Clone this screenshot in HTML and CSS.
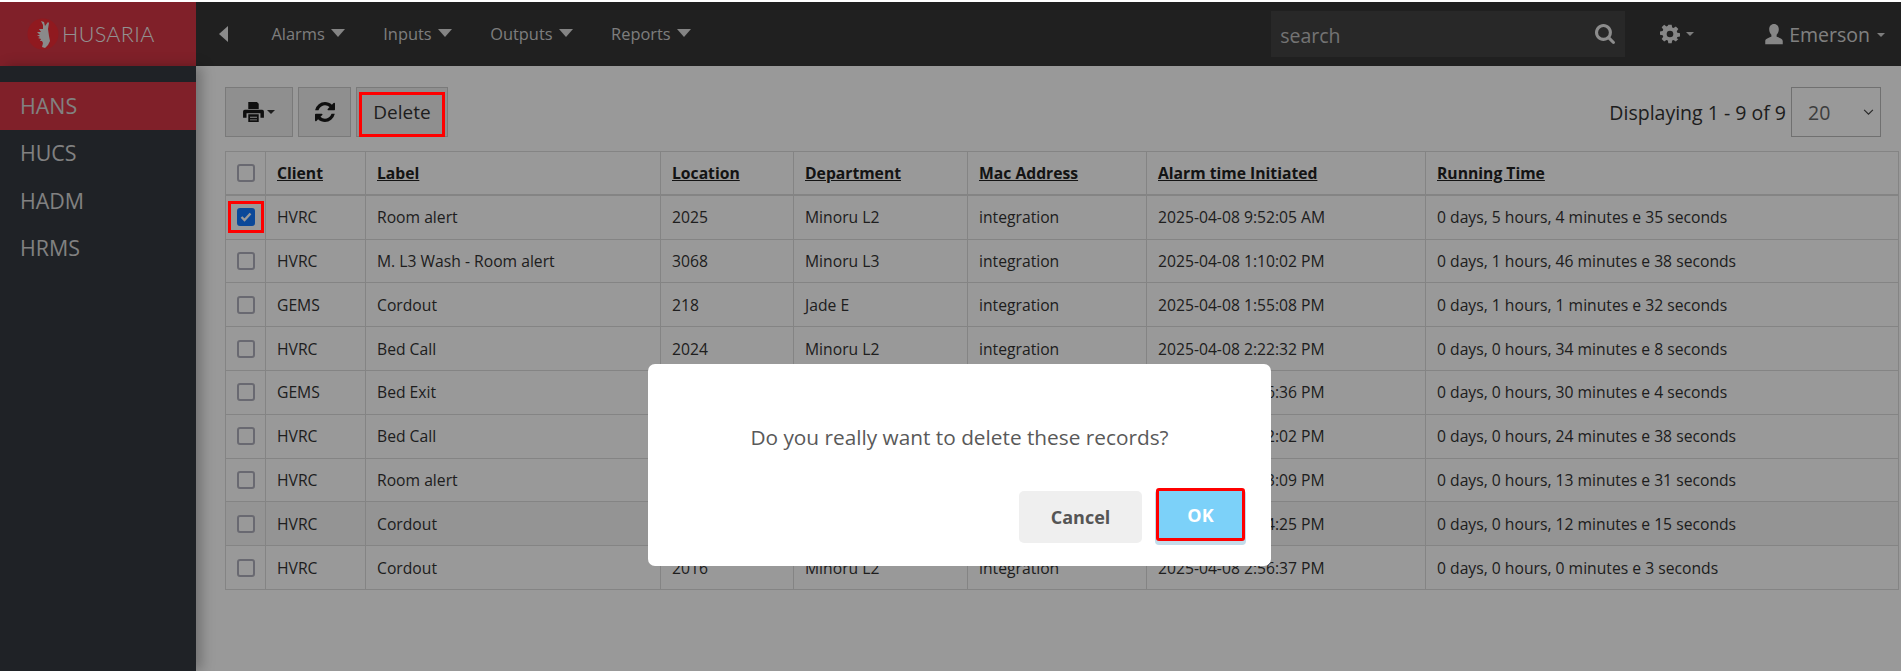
FILE: index.html
```html
<!DOCTYPE html>
<html lang="en">
<head>
<meta charset="utf-8">
<title>Husaria</title>
<link rel="stylesheet" href="styles.css">
</head>
<body>
<div class="app">
  <header class="navbar">
    <div class="brand">
      <svg class="brand-mark" viewBox="0 0 32 32" width="32" height="32" aria-hidden="true">
        <circle cx="16" cy="16" r="15.500" fill="#f02a34"/>
        <path d="M14 3l3 1 1 4 3-4 1 1-1 6 1 7 1 5-2 4-3 3-3-1 1-4-1-2-2 0 1-2-3-1 2-1-3-2 3 0-3-3 4 0-2-3 4 0 0-4z" fill="#e6e6e6"/>
      </svg>
      <span class="brand-name">HUSARIA</span>
    </div>
    <span class="collapse-arrow"></span>
    <nav class="menu">
      <a class="menu-item">Alarms<i class="tri"></i></a>
      <a class="menu-item">Inputs<i class="tri"></i></a>
      <a class="menu-item">Outputs<i class="tri"></i></a>
      <a class="menu-item">Reports<i class="tri"></i></a>
    </nav>
    <div class="search">
      <span class="search-text">search</span>
      <svg viewBox="0 0 1664 1664" width="20" height="20" aria-hidden="true"><path fill="#eaeaea" d="M1152 704q0-185-131.500-316.500T704 256 387.500 387.500 256 704t131.500 316.500T704 1152t316.500-131.500T1152 704zm512 832q0 52-38 90t-90 38q-54 0-90-38l-343-342q-179 124-399 124-143 0-273.500-55.500t-225-150-150-225T0 704t55.500-273.500 150-225 225-150T704 0t273.500 55.500 225 150 150 225T1408 704q0 220-124 399l343 343q37 37 37 90z"/></svg>
    </div>
    <div class="gear">
      <svg viewBox="0 0 24 24" width="20" height="20" aria-hidden="true"><path fill="#e0e0e0" fill-rule="evenodd" d="M10 1h4l.6 3.200 1.700.7L19 3l3 3-1.900 2.700.7 1.700 3.200.6v4l-3.200.6-.7 1.700L22 18l-3 3-2.700-1.900-1.700.7L14 23h-4l-.6-3.200-1.700-.7L5 21l-3-3 1.900-2.700-.7-1.700L0 13V9l3.200-.6.700-1.700L2 4l3-3 2.700 1.900 1.700-.7zM12 8a4 4 0 1 0 0 8 4 4 0 0 0 0-8z"/></svg>
      <i class="caret"></i>
    </div>
    <div class="user">
      <svg viewBox="0 0 20 24" width="20" height="21" aria-hidden="true"><path fill="#e0e0e0" d="M10 0c3.500 0 5.500 2.600 5.500 6 0 2.800-1.200 5-2.500 6.200v2.300c3 1 7 2.300 7 5V23H0v-3.500c0-2.700 4-4 7-5v-2.300C5.700 11 4.500 8.800 4.500 6 4.500 2.600 6.500 0 10 0z"/></svg>
      <span>Emerson</span>
      <i class="caret"></i>
    </div>
  </header>
  <div class="body">
    <aside class="sidebar">
      <a class="side-item active">HANS</a>
      <a class="side-item">HUCS</a>
      <a class="side-item">HADM</a>
      <a class="side-item">HRMS</a>
    </aside>
    <main class="content">
      <div class="toolbar">
        <div class="tools">
          <button class="tool tool-print">
            <svg viewBox="0 0 24 23" width="21" height="20" aria-hidden="true"><path fill="#1a1a1a" fill-rule="evenodd" d="M6 0h10l2 2v6H6zM2 9h20a2 2 0 0 1 2 2v7h-4v-5H4v5H0v-7a2 2 0 0 1 2-2zM6 14h12v9H6zm2 3v1h8v-1zm0 3v1h8v-1z"/></svg>
            <i class="caret dark"></i>
          </button>
          <button class="tool tool-refresh">
            <svg viewBox="0 0 1536 1536" width="20" height="20" aria-hidden="true"><path fill="#1a1a1a" d="M1511 928q0 5-1 7-64 268-268 434.500T764 1536q-146 0-282.500-55T238 1324l-129 129q-19 19-45 19t-45-19-19-45V960q0-26 19-45t45-19h448q26 0 45 19t19 45-19 45l-137 137q71 66 161 102t187 36q134 0 250-65t186-179q11-17 53-117 8-23 30-23h192q13 0 22.500 9.500t9.500 22.500zm25-800v448q0 26-19 45t-45 19h-448q-26 0-45-19t-19-45 19-45l138-138Q969 256 768 256q-134 0-250 65T332 500q-11 17-53 117-8 23-30 23H50q-13 0-22.500-9.500T18 608v-7q65-268 270-434.500T768 0q146 0 284 55.500T1297 212l130-129q19-19 45-19t45 19 19 45z"/></svg>
          </button>
          <button class="tool tool-delete">Delete</button>
        </div>
        <div class="paging">
          <span>Displaying 1 - 9 of 9</span>
          <div class="page-size"><span>20</span><svg viewBox="0 0 12 8" width="11" height="7" aria-hidden="true"><path d="M1 1l5 5 5-5" fill="none" stroke="#444" stroke-width="1.300"/></svg></div>
        </div>
      </div>
      <table class="grid">
        <colgroup>
          <col class="c0"><col class="c1"><col class="c2"><col class="c3"><col class="c4"><col class="c5"><col class="c6"><col>
        </colgroup>
        <thead>
          <tr>
            <th class="check"><span class="box"></span></th>
            <th>Client</th><th>Label</th><th>Location</th><th>Department</th><th>Mac Address</th><th>Alarm time Initiated</th><th>Running Time</th>
          </tr>
        </thead>
        <tbody>
          <tr><td class="check"><span class="box on"><svg viewBox="0 0 12 10" width="12" height="10" aria-hidden="true"><path d="M1.500 5l3 3 6-6.500" fill="none" stroke="#fff" stroke-width="2.400"/></svg></span></td><td>HVRC</td><td>Room alert</td><td>2025</td><td>Minoru L2</td><td>integration</td><td>2025-04-08 9:52:05 AM</td><td>0 days, 5 hours, 4 minutes e 35 seconds</td></tr>
          <tr><td class="check"><span class="box"></span></td><td>HVRC</td><td>M. L3 Wash - Room alert</td><td>3068</td><td>Minoru L3</td><td>integration</td><td>2025-04-08 1:10:02 PM</td><td>0 days, 1 hours, 46 minutes e 38 seconds</td></tr>
          <tr><td class="check"><span class="box"></span></td><td>GEMS</td><td>Cordout</td><td>218</td><td>Jade E</td><td>integration</td><td>2025-04-08 1:55:08 PM</td><td>0 days, 1 hours, 1 minutes e 32 seconds</td></tr>
          <tr><td class="check"><span class="box"></span></td><td>HVRC</td><td>Bed Call</td><td>2024</td><td>Minoru L2</td><td>integration</td><td>2025-04-08 2:22:32 PM</td><td>0 days, 0 hours, 34 minutes e 8 seconds</td></tr>
          <tr><td class="check"><span class="box"></span></td><td>GEMS</td><td>Bed Exit</td><td>208</td><td>Jade E</td><td>integration</td><td>2025-04-08 2:26:36 PM</td><td>0 days, 0 hours, 30 minutes e 4 seconds</td></tr>
          <tr><td class="check"><span class="box"></span></td><td>HVRC</td><td>Bed Call</td><td>2011</td><td>Minoru L2</td><td>integration</td><td>2025-04-08 2:32:02 PM</td><td>0 days, 0 hours, 24 minutes e 38 seconds</td></tr>
          <tr><td class="check"><span class="box"></span></td><td>HVRC</td><td>Room alert</td><td>2031</td><td>Minoru L2</td><td>integration</td><td>2025-04-08 2:43:09 PM</td><td>0 days, 0 hours, 13 minutes e 31 seconds</td></tr>
          <tr><td class="check"><span class="box"></span></td><td>HVRC</td><td>Cordout</td><td>2016</td><td>Minoru L2</td><td>integration</td><td>2025-04-08 2:44:25 PM</td><td>0 days, 0 hours, 12 minutes e 15 seconds</td></tr>
          <tr><td class="check"><span class="box"></span></td><td>HVRC</td><td>Cordout</td><td>2016</td><td>Minoru L2</td><td>integration</td><td>2025-04-08 2:56:37 PM</td><td>0 days, 0 hours, 0 minutes e 3 seconds</td></tr>
        </tbody>
      </table>
    </main>
  </div>
</div>
<div class="overlay">
  <span class="annot annot-delete"></span>
  <span class="annot annot-check"></span>
  <div class="dialog">
    <p class="question">Do you really want to delete these records?</p>
    <div class="actions">
      <button class="btn btn-cancel">Cancel</button>
      <button class="btn btn-ok">OK</button>
    </div>
  </div>
</div>
</body>
</html>
```
FILE: styles.css
```css
* { box-sizing: border-box; }
html, body { margin: 0; height: 100%; overflow: hidden; }
body { font-family: "Open Sans", "Noto Sans", sans-serif; background: #fff; color: #333; font-size: 14px; }
.app { display: flex; flex-direction: column; height: 671px; padding-top: 2px; }

.navbar { height: 64px; flex: none; display: flex; align-items: center; background: #363636; color: #d6d6d6; }
.brand { width: 196px; height: 100%; flex: none; display: flex; align-items: center; padding-left: 27px; gap: 3px; background: #d53645; }
.brand-mark { flex: none; }
.brand-name { font-family: "Lato", "Open Sans", sans-serif; font-weight: 300; font-size: 21.500px; letter-spacing: .4px; color: #f4f4f4; }
.collapse-arrow { width: 0; height: 0; margin-left: 23px; border-style: solid; border-width: 8px 9px 8px 0; border-color: transparent #e8e8e8 transparent transparent; }
.menu { display: flex; margin-left: 43.500px; gap: 38.500px; padding-bottom: 2px; }
.menu-item { display: flex; align-items: center; gap: 6px; font-size: 16.400px; color: #d0d0d0; }
.tri { width: 0; height: 0; border-style: solid; border-width: 8px 7px 0; border-color: #dcdcdc transparent transparent; }
.search { width: 354px; height: 46px; margin-left: auto; display: flex; align-items: center; justify-content: space-between; padding: 2px 10px 0 9px; background: #434343; font-size: 19.500px; color: #c0c0c0; }
.search svg { margin-top: -2px; }
.gear { margin-left: 35px; display: flex; align-items: center; gap: 4px; }
.user { margin-left: 70px; margin-right: 16px; display: flex; align-items: center; gap: 5px; padding-top: 1px; font-size: 19.500px; color: #d6d6d6; }
.caret { display: inline-block; width: 0; height: 0; margin-left: 2px; border-style: solid; border-width: 4.500px 4.500px 0; border-color: #d0d0d0 transparent transparent; }
.caret.dark { border-color: #333 transparent transparent; margin-left: 0; }

.body { flex: 1; display: flex; min-height: 0; }
.sidebar { width: 196px; flex: none; padding-top: 16px; background: #343a40; box-shadow: 6px 0 12px rgba(0,0,0,.25); position: relative; }
.side-item { display: flex; align-items: center; height: 47.500px; padding: 0 0 1px 20px; font-size: 21.400px; color: #d8d8d8; }
.side-item.active { background: #d53645; }
.content { flex: 1; min-width: 0; padding: 21px 2px 0 29px; background: #fff; }

.toolbar { display: flex; justify-content: space-between; align-items: flex-start; height: 64px; }
.tools { display: flex; gap: 5px; }
.tool { height: 50px; padding: 0; border: 1px solid #ccc; background: #eee; display: flex; align-items: center; justify-content: center; gap: 3px; font-family: inherit; color: #333; }
.tool-print { width: 68px; }
.tool-refresh { width: 53px; }
.tool-delete { width: 92px; font-size: 19px; }
.paging { display: flex; align-items: center; gap: 5px; font-size: 19.500px; color: #333; margin-right: 18px; }
.page-size { width: 90px; height: 50px; display: flex; align-items: center; justify-content: space-between; padding: 0 6px 0 16px; border: 1px solid #bbb; color: #666; }

.grid { width: 100%; border-collapse: collapse; table-layout: fixed; }
.c0 { width: 40px; } .c1 { width: 100px; } .c2 { width: 295px; } .c3 { width: 133px; } .c4 { width: 174px; } .c5 { width: 179px; } .c6 { width: 279px; }
.grid th, .grid td { height: 43.800px; padding: 0 11px; border: 1px solid #dcdcdc; text-align: left; font-size: 15.700px; white-space: nowrap; overflow: hidden; color: #333; }
.grid thead th { border-bottom-width: 2px; font-weight: 700; text-decoration: underline; color: #222; }
.grid .check { padding: 0; }
.grid .check > * { margin: 0 auto; }
.grid tbody tr:nth-child(8) td { background: #f7f7f7; }
.box { display: flex; align-items: center; justify-content: center; width: 18px; height: 18px; border: 2px solid #b0b0bc; border-radius: 3px; background: #fff; }
.box.on { background: #1278ff; border-color: #1278ff; }

.overlay { position: fixed; inset: 2px 0 0; background: rgba(0,0,0,.4); display: flex; justify-content: center; align-items: flex-start; }
.annot { position: absolute; border: 3px solid #ff0000; }
.annot-delete { left: 359px; top: 90px; width: 86px; height: 45px; }
.annot-check { left: 228px; top: 199px; width: 36px; height: 32px; }
.dialog { width: 623px; height: 202px; margin: 362px 0 0 18px; padding: 60px 26px 0; background: #fff; border-radius: 7px; color: #595959; }
.question { margin: 0; text-align: center; font-size: 20.800px; line-height: 27px; color: #595959; }
.actions { display: flex; justify-content: flex-end; align-items: flex-start; gap: 14px; margin-top: 37px; }
.btn { border: 0; border-radius: 5px; font-family: inherit; font-size: 18px; font-weight: 700; }
.btn-cancel { width: 123px; height: 52px; margin-top: 3px; background: #efefef; color: #555; }
.btn-ok { width: 89px; height: 53px; background: #7cd1f9; color: #fff; border: 3px solid #ff0000; border-radius: 3px; box-shadow: 0 3px 0 1px #c4dcea; }
```
